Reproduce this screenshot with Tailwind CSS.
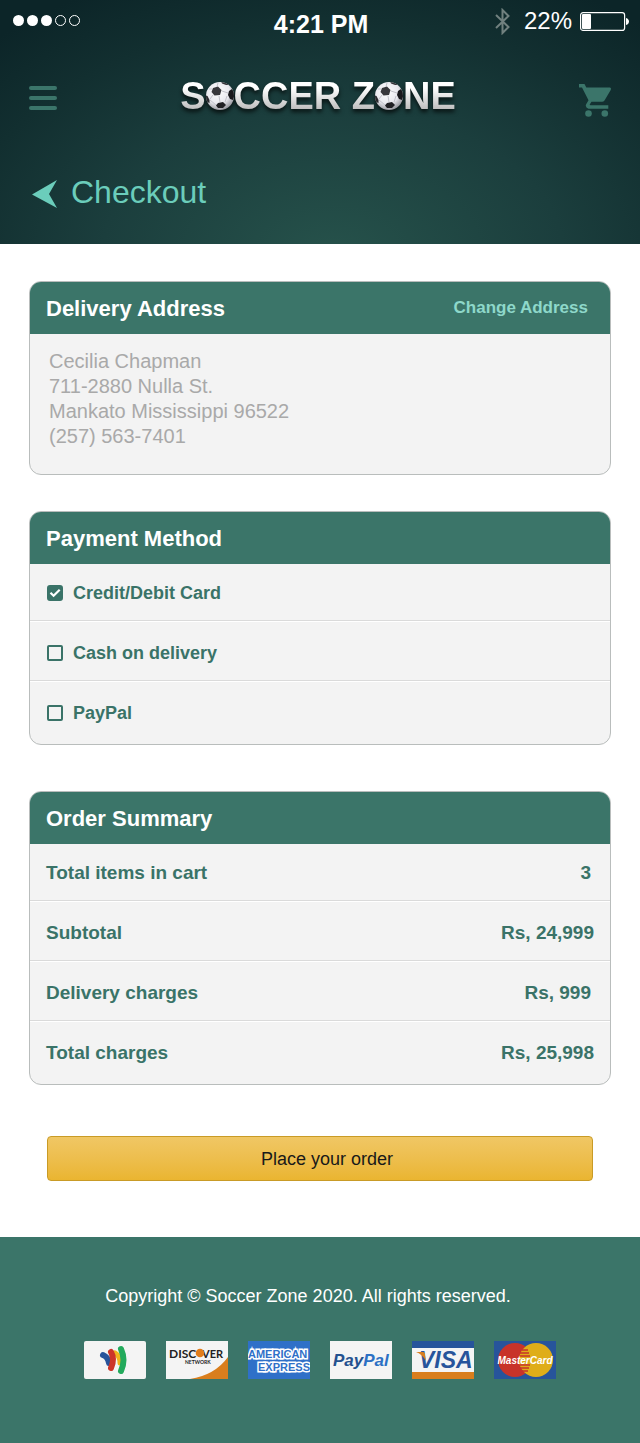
<!DOCTYPE html>
<html lang="en">
<head>
<meta charset="utf-8">
<meta name="viewport" content="width=device-width, initial-scale=1">
<title>Soccer Zone - Checkout</title>
<script src="https://cdn.jsdelivr.net/npm/@tailwindcss/browser@4"></script>
</head>
<body class="bg-white font-['Liberation_Sans',Arial,sans-serif] text-[#3a7368]">

<svg class="absolute size-0" aria-hidden="true">
  <defs>
    <radialGradient id="shine" cx="42%" cy="35%" r="65%">
      <stop offset="0" stop-color="#fff"/><stop offset=".65" stop-color="#e8e8ee"/><stop offset="1" stop-color="#9b9ba2"/>
    </radialGradient>
    <clipPath id="round"><circle cx="14" cy="14" r="14"/></clipPath>
    <symbol id="ball" viewBox="0 0 28 28">
      <circle cx="14" cy="14" r="14" fill="url(#shine)"/>
      <g clip-path="url(#round)">
        <path d="M16 9 22 11M7 13 4 17M13 14 14 20M11 4.500 12 1M6 7 3 7M21 14 19 20M4 18l6 5" stroke="#c2c2ca" fill="none"/>
        <path d="M7 6 12 4.500 15.500 8 14 13 8.500 13.500 5.500 10Z" fill="#38383c"/>
        <path d="M23 9 26 7 29 12 27 18 24 17 22 13Z" fill="#19191c"/>
        <path d="M12 21 17 20 20 23 17 26 12 26 10 23.500Z" fill="#202024"/>
        <path d="M-1 13 1.500 14 3.500 18 3.500 21 -1 19Z" fill="#29292d"/>
        <path d="M15 -1 20 0 23 3 20 3 16 1.500Z" fill="#343438"/>
      </g>
    </symbol>
  </defs>
</svg>

<header class="flex h-[244px] flex-col bg-[radial-gradient(ellipse_75%_125%_at_52%_105%,#26524b_0%,#1b3e3d_48%,#122f30_78%,#0c2528_100%)]">
  <div class="grid h-12 grid-cols-3 items-center pr-[11px] pl-[13px] text-white">
    <div class="mb-2 flex gap-[3px]" aria-label="Signal 3 of 5">
      <i class="size-[11px] rounded-full bg-white"></i>
      <i class="size-[11px] rounded-full bg-white"></i>
      <i class="size-[11px] rounded-full bg-white"></i>
      <i class="size-[11px] rounded-full border border-white"></i>
      <i class="size-[11px] rounded-full border border-white"></i>
    </div>
    <time class="text-center text-[25px] leading-7 font-bold whitespace-nowrap">4:21 PM</time>
    <div class="mb-1.5 flex items-center justify-end">
      <svg class="mr-3.5 h-[27px] w-[15px]" viewBox="0 0 15 27" fill="none" stroke="#71817f" stroke-width="2"><path d="M1 7 13.500 19 7.500 25V2l6 6L1 20"/></svg>
      <span class="mr-2 text-2xl leading-7">22%</span>
      <svg class="h-[19px] w-[49px]" viewBox="0 0 49 19"><rect x=".6" y=".6" width="44" height="17.800" rx="2.500" fill="none" stroke="#fff" stroke-width="1.200"/><rect x="2" y="2" width="9" height="15" rx="1" fill="#fff"/><path d="M46 6c4 1 4 6 0 7Z" fill="#fff"/></svg>
    </div>
  </div>

  <div class="flex h-[100px] items-center justify-between px-[29px]">
    <button type="button" aria-label="Menu" class="flex w-7 flex-col gap-1.5">
      <i class="h-1 w-full rounded-sm bg-[#3b756a]"></i>
      <i class="h-1 w-full rounded-sm bg-[#3b756a]"></i>
      <i class="h-1 w-full rounded-sm bg-[#3b756a]"></i>
    </button>
    <h1 class="mb-1 flex items-center text-[38px] leading-10 font-bold drop-shadow-[0_3px_2px_rgba(0,0,0,0.7)]" aria-label="Soccer Zone">
      <span class="bg-linear-to-b from-white from-30% to-[#bcbcbc] to-85% bg-clip-text text-transparent">S</span>
      <svg class="size-7"><use href="#ball"/></svg>
      <span class="bg-linear-to-b from-white from-30% to-[#bcbcbc] to-85% bg-clip-text text-transparent">CCER Z</span>
      <svg class="size-7"><use href="#ball"/></svg>
      <span class="bg-linear-to-b from-white from-30% to-[#bcbcbc] to-85% bg-clip-text text-transparent">NE</span>
    </h1>
    <button type="button" aria-label="Cart" class="pt-1">
      <svg class="h-[33px] w-8" viewBox="0 0 32 33" fill="#3b756a"><path d="M0 0H5.500L7.300 3.400H31Q32.500 4 31.700 6L25.500 16.400Q24.500 17.800 23 17.800H12.500L10.700 20.600Q10.700 21.200 11.500 21.200H29.300V24.700H9.500Q6 23.500 7 20.500L9.500 16.200 3 3.400H0Z"/><circle cx="9.500" cy="29.500" r="3.300"/><circle cx="25.800" cy="29.500" r="3.300"/></svg>
    </button>
  </div>

  <a href="#" class="mt-6 flex items-center gap-3.5 self-start pl-8 text-[32px] leading-10 text-[#6bcdbb]">
    <svg class="mt-1 h-7 w-[25px]" viewBox="0 0 25 28" fill="currentColor"><path d="M25 0 17 14 25 28 0 14.500Z"/></svg>
    Checkout
  </a>
</header>

<main class="flex flex-col px-[29px] pt-[37px] pb-14">
  <section class="overflow-hidden rounded-xl border border-[#b9bdbc] bg-[#f3f3f3]">
    <div class="flex h-[52px] items-center justify-between bg-[#3b7569] pr-[22px] pl-4">
      <h2 class="text-[22px] font-bold text-white">Delivery Address</h2>
      <a href="#" class="text-[17px] font-bold text-[#8ed8ca]">Change Address</a>
    </div>
    <address class="px-[19px] pt-[15px] pb-[25px] text-xl leading-[25px] text-[#a9a9a9] not-italic">Cecilia Chapman<br>711-2880 Nulla St.<br>Mankato Mississippi 96522<br>(257) 563-7401</address>
  </section>

  <section class="mt-9 overflow-hidden rounded-xl border border-[#b9bdbc] bg-[#f3f3f3]">
    <h2 class="flex h-[52px] items-center bg-[#3b7569] pl-4 text-[22px] font-bold text-white">Payment Method</h2>
    <div class="text-lg font-bold">
      <label class="flex h-[57px] items-center gap-2.5 border-b border-[#dadada] px-[17px] pt-0.5">
        <span class="grid size-4">
          <input type="checkbox" checked class="peer col-start-1 row-start-1 size-4 appearance-none rounded-[2px] border-2 border-[#3a7368] checked:rounded-[3px] checked:bg-[#3a7368]">
          <svg class="pointer-events-none invisible col-start-1 row-start-1 size-4 peer-checked:visible" viewBox="0 0 16 16" fill="none" stroke="#fff" stroke-width="2.200"><path d="M3.500 7.800 6.600 10.800 12.700 4.800"/></svg>
        </span>
        Credit/Debit Card
      </label>
      <label class="flex h-[60px] items-center gap-2.5 border-t border-b border-t-white border-b-[#dadada] px-[17px] pt-1">
        <span class="grid size-4">
          <input type="checkbox" class="peer col-start-1 row-start-1 size-4 appearance-none rounded-[2px] border-2 border-[#3a7368] checked:rounded-[3px] checked:bg-[#3a7368]">
          <svg class="pointer-events-none invisible col-start-1 row-start-1 size-4 peer-checked:visible" viewBox="0 0 16 16" fill="none" stroke="#fff" stroke-width="2.200"><path d="M3.500 7.800 6.600 10.800 12.700 4.800"/></svg>
        </span>
        Cash on delivery
      </label>
      <label class="flex h-[63px] items-center gap-2.5 border-t border-white px-[17px]">
        <span class="grid size-4">
          <input type="checkbox" class="peer col-start-1 row-start-1 size-4 appearance-none rounded-[2px] border-2 border-[#3a7368] checked:rounded-[3px] checked:bg-[#3a7368]">
          <svg class="pointer-events-none invisible col-start-1 row-start-1 size-4 peer-checked:visible" viewBox="0 0 16 16" fill="none" stroke="#fff" stroke-width="2.200"><path d="M3.500 7.800 6.600 10.800 12.700 4.800"/></svg>
        </span>
        PayPal
      </label>
    </div>
  </section>

  <section class="mt-[46px] overflow-hidden rounded-xl border border-[#b9bdbc] bg-[#f3f3f3]">
    <h2 class="flex h-[52px] items-center bg-[#3b7569] pl-4 text-[22px] font-bold text-white">Order Summary</h2>
    <table class="w-full border-separate border-spacing-0 text-[19px] leading-7 font-bold">
      <tbody>
        <tr>
          <th scope="row" class="h-[57px] border-b border-[#dadada] pt-0.5 pl-4 text-left">Total items in cart</th>
          <td class="border-b border-[#dadada] pt-0.5 pr-[19px] text-right">3</td>
        </tr>
        <tr>
          <th scope="row" class="h-[60px] border-t border-b border-t-white border-b-[#dadada] pt-1 pl-4 text-left">Subtotal</th>
          <td class="border-t border-b border-t-white border-b-[#dadada] pt-1 pr-4 text-right">Rs, 24,999</td>
        </tr>
        <tr>
          <th scope="row" class="h-[60px] border-t border-b border-t-white border-b-[#dadada] pt-1 pl-4 text-left">Delivery charges</th>
          <td class="border-t border-b border-t-white border-b-[#dadada] pt-1 pr-[19px] text-right">Rs, 999</td>
        </tr>
        <tr>
          <th scope="row" class="h-[63px] border-t border-white pl-4 text-left">Total charges</th>
          <td class="border-t border-white pr-4 text-right">Rs, 25,998</td>
        </tr>
      </tbody>
    </table>
  </section>

  <button type="submit" class="mx-[18px] mt-[51px] h-[45px] rounded border border-[#c99b26] bg-linear-to-b from-[#f0c764] to-[#eab530] pl-3.5 text-lg text-[#191919]">Place your order</button>
</main>

<footer class="flex flex-col items-center bg-[#3b7569] pt-[45px] pb-16 text-white">
  <p class="pr-6 text-lg leading-7">Copyright © Soccer Zone 2020. All rights reserved.</p>
  <div class="mt-[31px] flex gap-5">
    <svg class="h-[38px] w-[62px] rounded-xs bg-[#f4f4f4]" viewBox="0 0 62 38" role="img" aria-label="Wallet" fill="none" stroke-linecap="round">
      <path d="M31 12Q36 15 36 22" stroke="#f0b51c" stroke-width="5"/>
      <path d="M19 14Q24 16 25 22" stroke="#27539a" stroke-width="6"/>
      <path d="M27 11Q31 18 27 27" stroke="#cd3529" stroke-width="6"/>
      <path d="M37 8Q42 19 37 30" stroke="#23aa5c" stroke-width="6"/>
    </svg>
    <svg class="h-[38px] w-[62px] bg-[#f4f4f4]" viewBox="0 0 62 38" role="img" aria-label="Discover Network">
      <path d="M62 16V38H24Q49 34 62 16Z" fill="#d97e1d"/>
      <g class="font-['Lato',sans-serif] font-bold" fill="#222"><text x="3" y="17" font-size="12">DISC</text><text x="36" y="17" font-size="11">VER</text><text x="19" y="23" font-size="5">NETWORK</text></g>
      <circle cx="34" cy="12" r="4.300" fill="#e17d1c"/>
    </svg>
    <svg class="h-[38px] w-[62px] bg-[#2f70c8]" viewBox="0 0 62 38" role="img" aria-label="American Express">
      <g class="font-['Liberation_Sans',sans-serif] font-bold" font-size="11" fill="#2f70c8" stroke="#fff" stroke-width="3" paint-order="stroke"><text x="0" y="17">AMERICAN</text><text x="10" y="30">EXPRESS</text></g>
    </svg>
    <svg class="h-[38px] w-[62px] bg-[#f4f4f4]" viewBox="0 0 62 38" role="img" aria-label="PayPal">
      <g class="font-['Liberation_Sans',sans-serif] font-bold italic" font-size="17"><text x="3" y="25" fill="#24518f">Pay<tspan fill="#2c70c4">Pal</tspan></text></g>
    </svg>
    <svg class="h-[38px] w-[62px] bg-[#f4f4f4]" viewBox="0 0 62 38" role="img" aria-label="Visa">
      <path d="M0 0H62V7H0Z" fill="#27549b"/><path d="M0 31H62V38H0Z" fill="#d97e1d"/>
      <text x="7" y="27" class="font-['Liberation_Sans',sans-serif] font-bold italic" font-size="23" fill="#27549b">VISA</text>
      <path d="M4 11H11Q13 11 13 14L14 20Q10 13 4 11Z" fill="#d97e1d"/>
    </svg>
    <svg class="h-[38px] w-[62px] bg-[#27549b]" viewBox="0 0 62 38" role="img" aria-label="MasterCard">
      <circle cx="21" cy="19" r="17" fill="#c8332a"/><circle cx="42" cy="19" r="17" fill="#dfad19"/>
      <path d="M28 9h6M26 12h9M26 15h10M26 24h10M26 27h9M28 30h6" stroke="#c8332a" stroke-width="1.500"/>
      <text x="31" y="23" text-anchor="middle" class="font-['Liberation_Sans',sans-serif] font-bold italic" font-size="10" fill="#fff">MasterCard</text>
    </svg>
  </div>
</footer>
</body>
</html>
